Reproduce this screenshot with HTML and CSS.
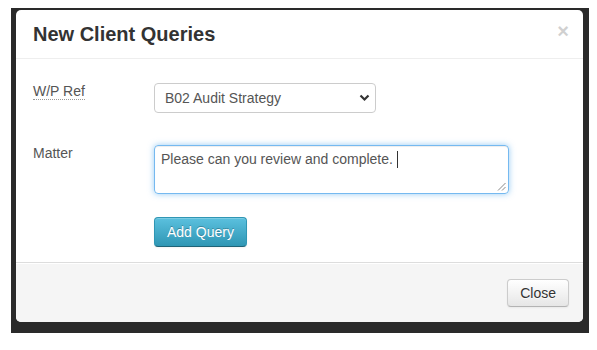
FILE: index.html
```html
<html>
  <head>
    <link rel="stylesheet" href="styles.css">
  </head>
  <body>
    <div class="backdrop">
      <div class="modal">
        <div class="modal-header">
          <h3>New Client Queries</h3>
          <span class="close">&times;</span>
        </div>
        <div class="modal-body">
          <div class="field">
            <label><abbr title="Working Paper Reference">W/P Ref</abbr></label>
            <div class="select">
              <span>B02 Audit Strategy</span>
              <svg width="11" height="8" viewBox="0 0 11 8"><path d="M1.5 1.5 L5.5 5.5 L9.5 1.5" fill="none" stroke="#333" stroke-width="2.2"/></svg>
            </div>
          </div>
          <div class="field field-matter">
            <label>Matter</label>
            <div class="matter">
              Please can you review and complete. <span class="caret"></span>
              <svg class="grip" width="9" height="9" viewBox="0 0 9 9"><path d="M8.5 1 L1 8.5 M8.5 5 L5 8.5" stroke="#888" stroke-width="1"/></svg>
            </div>
          </div>
          <div class="field">
            <label></label>
            <button class="btn btn-info">Add Query</button>
          </div>
        </div>
        <div class="modal-footer">
          <button class="btn">Close</button>
        </div>
      </div>
    </div>
  </body>
</html>
```

FILE: styles.css
```css
body {
  margin: 0;
  font-family: "Liberation Sans", Arial, sans-serif;
  font-size: 14px;
  color: #333;
}

.backdrop {
  margin: 8px 8px 0 11px;
  padding: 2px 6px 11px 5px;
  background-color: #2a2a2a;
}

.modal {
  background-color: #fff;
  border-radius: 5px;
  overflow: hidden;
}

.modal-header {
  height: 48px;
  padding: 0 14px 0 17px;
  border-bottom: 1px solid #eee;
  display: flex;
  align-items: center;
  justify-content: space-between;
}

.modal-header h3 {
  margin: 0;
  font-size: 20px;
  font-weight: bold;
  color: #333;
}

.close {
  font-size: 20px;
  font-weight: bold;
  line-height: 20px;
  color: #000;
  opacity: 0.18;
  margin-top: -6px;
}

.modal-body {
  padding: 24px 17px 15px 17px;
}

.field {
  display: flex;
  align-items: flex-start;
}

.field + .field {
  margin-top: 32px;
}

.field:last-child {
  margin-top: 23px;
}

.field label {
  width: 121px;
  flex: none;
  line-height: 14px;
  padding-top: 1px;
  color: #555;
}

abbr {
  text-decoration: none;
  border-bottom: 1px dotted #999;
}

.select {
  width: 222px;
  height: 30px;
  box-sizing: border-box;
  border: 1px solid #ccc;
  border-radius: 4px;
  padding: 0 5px 0 10px;
  display: flex;
  align-items: center;
  justify-content: space-between;
  color: #555;
}

.matter {
  position: relative;
  width: 355px;
  height: 49px;
  box-sizing: border-box;
  border: 1px solid rgba(82, 168, 236, 0.8);
  border-radius: 4px;
  box-shadow: inset 0 1px 1px rgba(0, 0, 0, 0.075), 0 0 6px rgba(82, 168, 236, 0.6);
  padding: 3px 6px;
  line-height: 20px;
  color: #555;
}

.caret {
  display: inline-block;
  width: 1px;
  height: 17px;
  background-color: #333;
  vertical-align: -4px;
}

.grip {
  position: absolute;
  right: 2px;
  bottom: 2px;
}

.btn {
  font-family: "Liberation Sans", Arial, sans-serif;
  font-size: 14px;
  line-height: 20px;
  padding: 3px 12px;
  color: #333;
  text-shadow: 0 1px 1px rgba(255, 255, 255, 0.75);
  background-image: linear-gradient(#fff, #e6e6e6);
  border: 1px solid #ccc;
  border-bottom-color: #b3b3b3;
  border-radius: 4px;
  box-shadow: inset 0 1px 0 rgba(255, 255, 255, 0.2), 0 1px 2px rgba(0, 0, 0, 0.05);
}

.btn-info {
  padding: 4px 12px;
  color: #fff;
  text-shadow: 0 -1px 0 rgba(0, 0, 0, 0.25);
  background-image: linear-gradient(#5bc0de, #2f96b4);
  border-color: #2f96b4 #2f96b4 #1f6377;
}

.modal-footer {
  padding: 16px 14px 15px;
  border-top: 1px solid #ddd;
  background-color: #f5f5f5;
  box-shadow: inset 0 1px 0 #fff;
  display: flex;
  justify-content: flex-end;
}
```
